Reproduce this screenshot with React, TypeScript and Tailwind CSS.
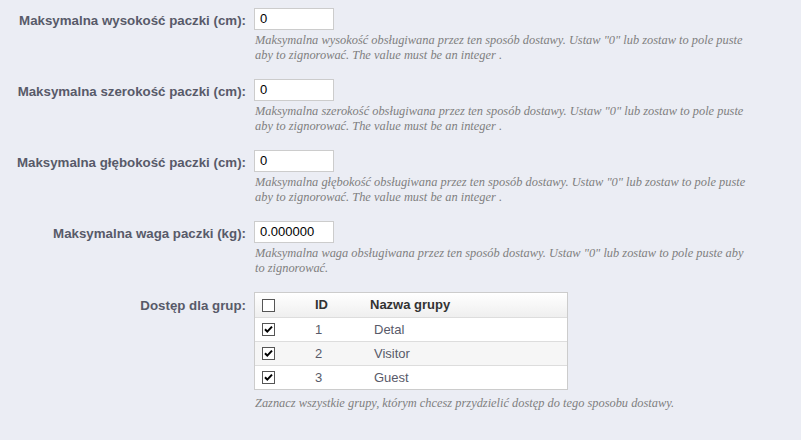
const rows = [
  {
    label: "Maksymalna wysokość paczki (cm):",
    value: "0",
    hint: 'Maksymalna wysokość obsługiwana przez ten sposób dostawy. Ustaw "0" lub zostaw to pole puste aby to zignorować. The value must be an integer .',
  },
  {
    label: "Maksymalna szerokość paczki (cm):",
    value: "0",
    hint: 'Maksymalna szerokość obsługiwana przez ten sposób dostawy. Ustaw "0" lub zostaw to pole puste aby to zignorować. The value must be an integer .',
  },
  {
    label: "Maksymalna głębokość paczki (cm):",
    value: "0",
    hint: 'Maksymalna głębokość obsługiwana przez ten sposób dostawy. Ustaw "0" lub zostaw to pole puste aby to zignorować. The value must be an integer .',
  },
  {
    label: "Maksymalna waga paczki (kg):",
    value: "0.000000",
    hint: 'Maksymalna waga obsługiwana przez ten sposób dostawy. Ustaw "0" lub zostaw to pole puste aby to zignorować.',
  },
];

const groups = [
  { id: 1, name: "Detal" },
  { id: 2, name: "Visitor" },
  { id: 3, name: "Guest" },
];

function Checkbox({ checked }: { checked?: boolean }) {
  return (
    <span className="flex h-[13px] w-[13px] items-center justify-center border border-[#555] bg-white">
      {checked && (
        <svg width="9" height="9" viewBox="0 0 9 9">
          <path d="M1 4.2 L3.3 6.6 L8 1.6" fill="none" stroke="#000" strokeWidth="2" />
        </svg>
      )}
    </span>
  );
}

export default function App() {
  return (
    <div
      className="min-h-[440px] w-[801px] bg-[#ebedf4] pt-[8px]"
      style={{ fontFamily: '"Liberation Sans", Arial, sans-serif' }}
    >
      {rows.map((r) => (
        <div key={r.label} className="flex mb-[16px]">
          <label className="w-[254px] shrink-0 pr-[8px] pt-[3px] text-right text-[13.3px] font-bold text-[#585a69]">
            {r.label}
          </label>
          <div>
            <div className="flex h-[22px] w-[80px] items-center border border-[#ccc] bg-white px-[5px] text-[13px] text-black">
              {r.value}
            </div>
            <p className="mt-[3px] w-[493px] pl-[1px] font-['Liberation_Serif',serif] text-[12.4px] italic leading-[15px] text-[#7f7f7f]">
              {r.hint}
            </p>
          </div>
        </div>
      ))}

      <div className="flex">
        <label className="w-[254px] shrink-0 pr-[8px] pt-[4px] text-right text-[13.3px] font-bold text-[#585a69]">
          Dostęp dla grup:
        </label>
        <div>
          <div className="w-[314px] border border-[#ccc] bg-white text-[13px]">
            <div className="flex h-[24px] items-center bg-gradient-to-b from-white to-[#efefef] font-bold text-[#333]">
              <div className="w-[60px] pl-[7px]">
                <Checkbox />
              </div>
              <div className="w-[55px]">ID</div>
              <div>Nazwa grupy</div>
            </div>
            {groups.map((g, i) => (
              <div
                key={g.id}
                className={`flex h-[24px] items-center border-t border-[#ddd] text-[#585a69] ${
                  i % 2 === 1 ? "bg-[#f6f6f6]" : "bg-white"
                }`}
              >
                <div className="w-[60px] pl-[7px]">
                  <Checkbox checked />
                </div>
                <div className="w-[59px]">{g.id}</div>
                <div>{g.name}</div>
              </div>
            ))}
          </div>
          <p className="mt-[6px] pl-[1px] font-['Liberation_Serif',serif] text-[12.4px] italic leading-[15px] text-[#7f7f7f]">
            Zaznacz wszystkie grupy, którym chcesz przydzielić dostęp do tego sposobu dostawy.
          </p>
        </div>
      </div>
    </div>
  );
}
